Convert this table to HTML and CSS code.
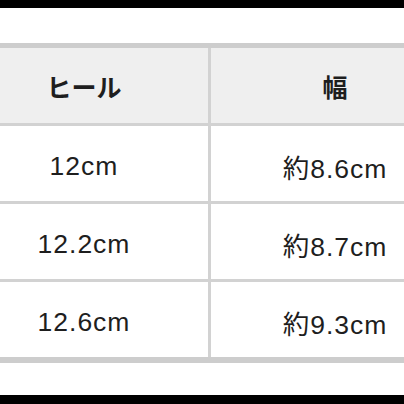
FILE: index.html
```html
<!DOCTYPE html>
<html lang="ja">
<head>
<meta charset="utf-8">
<link rel="stylesheet" href="styles.css">
</head>
<body>
<div class="frame">
  <table class="size-table">
    <thead>
      <tr><th class="col-a">ヒール</th><th class="col-b">幅</th></tr>
    </thead>
    <tbody>
      <tr><td class="col-a">12cm</td><td class="col-b">約8.6cm</td></tr>
      <tr><td class="col-a">12.2cm</td><td class="col-b">約8.7cm</td></tr>
      <tr class="last"><td class="col-a">12.6cm</td><td class="col-b">約9.3cm</td></tr>
    </tbody>
  </table>
</div>
</body>
</html>
```
FILE: styles.css
```css
html, body {
  margin: 0;
  padding: 0;
  background: #000;
  width: 404px;
  height: 404px;
  overflow: hidden;
}
.frame {
  margin-top: 8px;
  height: 387px;
  background: #fff;
  padding-top: 35px;
  box-sizing: border-box;
  overflow: hidden;
}
.size-table {
  border-collapse: separate;
  border-spacing: 0;
  margin-left: -40px;
  width: 499px;
  table-layout: fixed;
  border-top: 5px solid #cdcdcd;
  border-bottom: 6px solid #cdcdcd;
  font-family: "Liberation Sans", "Noto Sans CJK JP", sans-serif;
  color: #1e1e1e;
}
.size-table th,
.size-table td {
  padding: 0;
  text-align: center;
  vertical-align: middle;
  box-sizing: border-box;
  border-bottom: 3px solid #d2d2d2;
}
.size-table th {
  background: #efefef;
  height: 78px;
  font-family: "Noto Sans CJK JP", sans-serif;
  font-weight: 700;
  font-size: 25px;
}
.size-table td {
  height: 78px;
  padding-top: 5px;
  font-size: 26.5px;
  letter-spacing: 1px;
  font-weight: 400;
}
.size-table .last td {
  height: 75px;
  border-bottom: none;
}
.col-a {
  width: 251px;
  border-right: 3px solid #d2d2d2;
}
.col-b {
  width: 248px;
}
```
